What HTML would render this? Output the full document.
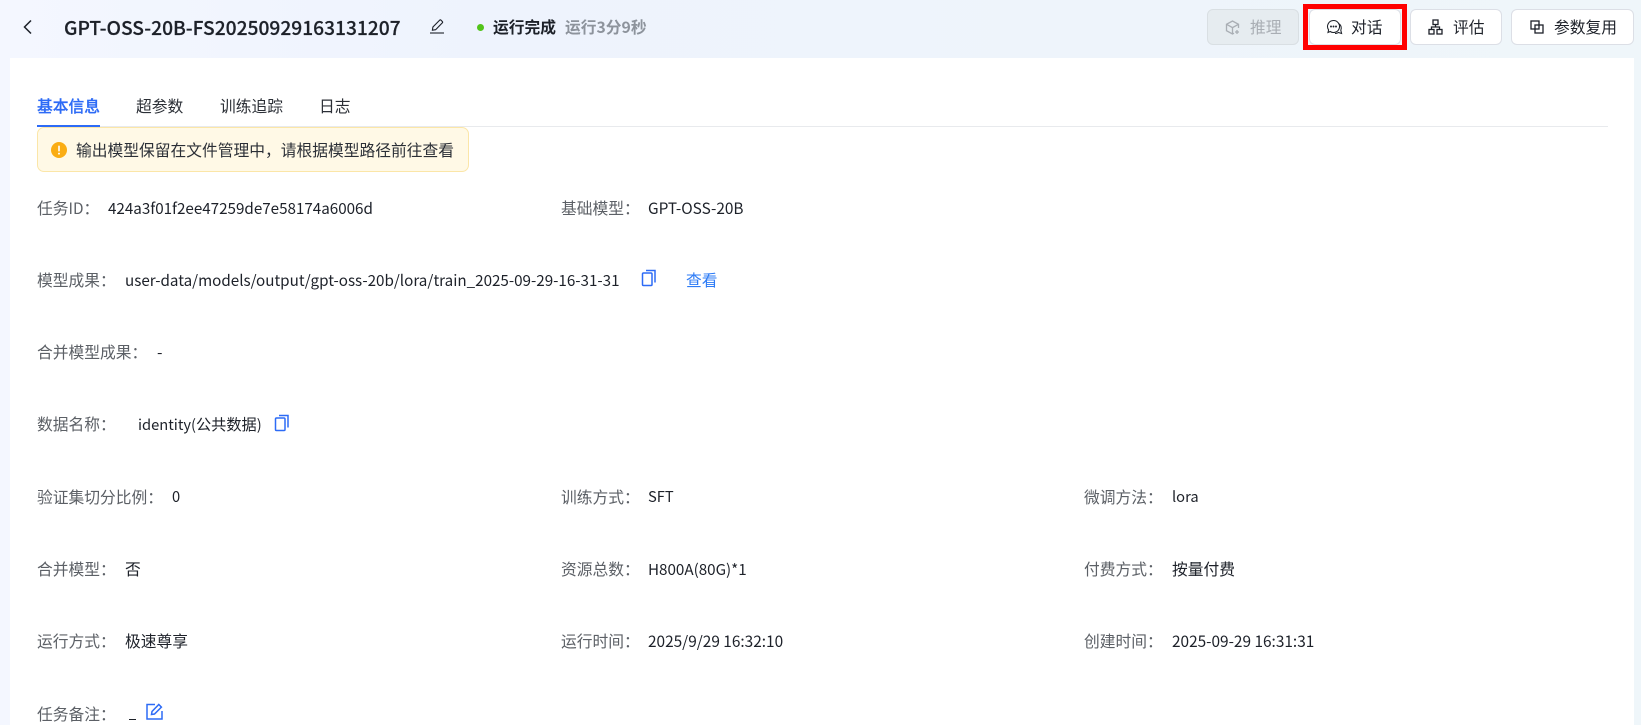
<!DOCTYPE html>
<html lang="zh-CN">
<head>
<meta charset="utf-8">
<title>GPT-OSS-20B</title>
<style>
html,body{margin:0;padding:0;width:1641px;height:725px;overflow:hidden;background:#fff}
body{position:relative;font-family:"Noto Sans CJK SC","Liberation Sans",sans-serif;font-size:15.75px;color:#1d2129}
#bg{position:absolute;left:0;top:0;width:1641px;height:725px;background:linear-gradient(90deg,#f4f7ff 0%,#eef3fd 30%,#eef4fb 65%,#eff6fa 100%)}
#panel{position:absolute;left:10px;top:58px;width:1624px;height:667px;background:#fff}
.t{position:absolute;white-space:nowrap;line-height:20px;height:20px;transform:translateY(-50%)}
.l{color:#5c6066}
.v{color:#1d2129}
.n{font-size:15.3px}
.tab{font-size:15.75px;color:#2b2f36}
.btn{position:absolute;top:9px;height:36px;box-sizing:border-box;background:#fff;border:1px solid #dcdfe6;border-radius:6px}
svg{position:absolute;display:block;fill:none}
</style>
</head>
<body>
<div id="bg"></div>
<div id="panel"></div>

<svg style="left:21px;top:17px" width="14" height="20" viewBox="0 0 14 20" stroke="#1d2129" stroke-width="1.5"><path d="M10 3.5 3.5 10 10 16.5"/></svg>
<span class="t" style="left:64px;top:27px;font-size:19.2px;font-weight:500;color:#1d2129;-webkit-text-stroke:.2px #1d2129">GPT-OSS-20B-FS20250929163131207</span>
<svg style="left:429px;top:18px" width="16" height="16" viewBox="0 0 16 16" stroke="#1d2129" stroke-width="1.1"><path d="M1 15h14"/><path d="M3.4 12.2 3.9 9 10.6 2.2a1 1 0 0 1 1.4 0l1.3 1.3a1 1 0 0 1 0 1.4L6.6 11.7Z"/></svg>
<div style="position:absolute;left:477px;top:24px;width:7px;height:7px;border-radius:50%;background:#52c41a"></div>
<span class="t" style="left:493px;top:27px;font-size:15.75px;font-weight:700;color:#1d2129">运行完成</span>
<span class="t" style="left:565px;top:27px;font-size:15.75px;font-weight:700;color:#8d939c">运行3分9秒</span>

<div class="btn" style="left:1207px;width:92px;background:#e6ecf0;border-color:#d9dfe3"></div>
<svg style="left:1225px;top:20px" width="15" height="15" viewBox="0 0 15 15" stroke="#a9aeb4" stroke-width="1.3"><path d="M13.5 8V4.3L7.5 1 1.5 4.3v6.4l6 3.3 1.5-.8"/><path d="M1.5 4.3l6 3.3 6-3.3M7.5 7.6V14"/><path d="M12 10v4M10 12h4"/></svg>
<span class="t" style="left:1250px;top:27px;font-size:15.75px;color:#a9aeb4">推理</span>

<div class="btn" style="left:1309px;width:92px"></div>
<svg style="left:1326px;top:19px" width="17" height="17" viewBox="0 0 17 17" stroke="#1d2129" stroke-width="1.05"><path d="M7.500 1.500a6 6 0 1 1-3.300 11L2 13.500l.6-2.600A6 6 0 0 1 7.500 1.500Z"/><path d="M13.200 4.800a5.500 5.500 0 0 1 1.600 6.500l.8 3.200-3.200-1a5.500 5.500 0 0 1-3.400 1"/><circle cx="5" cy="7.500" r=".45" fill="#1d2129"/><circle cx="7.500" cy="7.500" r=".45" fill="#1d2129"/><circle cx="10" cy="7.500" r=".45" fill="#1d2129"/></svg>
<span class="t" style="left:1351px;top:27px;font-size:15.75px">对话</span>

<div class="btn" style="left:1410px;width:92px"></div>
<svg style="left:1428px;top:19px" width="15" height="16" viewBox="0 0 15 16" stroke="#1d2129" stroke-width="1.3"><rect x="5" y="1" width="5" height="4.500"/><rect x="1" y="10.500" width="5" height="4.500"/><rect x="9" y="10.500" width="5" height="4.500"/><path d="M7.500 5.500V8M3.500 10.500V8h8v2.500"/></svg>
<span class="t" style="left:1453px;top:27px;font-size:15.75px">评估</span>

<div class="btn" style="left:1511px;width:123px"></div>
<svg style="left:1530px;top:20px" width="14" height="14" viewBox="0 0 14 14" stroke="#1d2129" stroke-width="1.3"><rect x="1" y="1" width="8" height="8"/><rect x="5" y="5" width="8" height="8"/></svg>
<span class="t" style="left:1554px;top:27px;font-size:15.75px">参数复用</span>

<div style="position:absolute;left:1303px;top:4px;width:104px;height:46px;box-sizing:border-box;border:5px solid #f00"></div>

<div style="position:absolute;left:37px;top:126px;width:1571px;height:1px;background:#e8eaed"></div>
<div style="position:absolute;left:37px;top:125px;width:63px;height:2px;background:#2d6bf6"></div>
<span class="t tab" style="left:37px;top:105.500px;color:#2d6bf6;font-weight:500;-webkit-text-stroke:.25px #2d6bf6">基本信息</span>
<span class="t tab" style="left:136px;top:105.500px">超参数</span>
<span class="t tab" style="left:220px;top:105.500px">训练追踪</span>
<span class="t tab" style="left:319px;top:105.500px">日志</span>

<div style="position:absolute;left:37px;top:127px;width:432px;height:45px;box-sizing:border-box;background:#fff9e6;border:1px solid #fbe6a8;border-radius:7px"></div>
<svg style="left:51px;top:142px" width="16" height="16" viewBox="0 0 16 16"><circle cx="8" cy="8" r="8" fill="#faad14"/><rect x="7.200" y="3.500" width="1.600" height="6" rx=".8" fill="#fff"/><circle cx="8" cy="11.600" r="1" fill="#fff"/></svg>
<span class="t" style="left:76px;top:149.500px;font-size:15.75px;color:#2b2f36">输出模型保留在文件管理中，请根据模型路径前往查看</span>

<span class="t l" style="left:37px;top:208px">任务<span class="n">ID</span>：</span>
<span class="t v" style="left:108px;top:208px;font-size:15.2px">424a3f01f2ee47259de7e58174a6006d</span>
<span class="t l" style="left:561px;top:208px">基础模型：</span>
<span class="t v" style="left:648px;top:208px;font-size:15.4px">GPT-OSS-20B</span>

<span class="t l" style="left:37px;top:279.500px">模型成果：</span>
<span class="t v" style="left:125px;top:279.500px;font-size:15.2px">user-data/models/output/gpt-oss-20b/lora/train_2025-09-29-16-31-31</span>
<svg style="left:641px;top:269px" width="16" height="18" viewBox="0 0 16 18" stroke="#2d6bf6" stroke-width="1.500"><rect x="1.500" y="4" width="9.500" height="12.500" rx="1"/><path d="M5 1.500h9v12"/></svg>
<span class="t" style="left:686px;top:279.500px;color:#2d7bf6">查看</span>

<span class="t l" style="left:37px;top:352px">合并模型成果：</span>
<span class="t v" style="left:157px;top:352px">-</span>

<span class="t l" style="left:37px;top:424px">数据名称：</span>
<span class="t v" style="left:138px;top:424px"><span style="font-size:14.7px">identity(</span><span style="font-size:15.2px">公共数据</span><span style="font-size:14.7px">)</span></span>
<svg style="left:274px;top:414px" width="16" height="18" viewBox="0 0 16 18" stroke="#2d6bf6" stroke-width="1.500"><rect x="1.500" y="4" width="9.500" height="12.500" rx="1"/><path d="M5 1.500h9v12"/></svg>

<span class="t l" style="left:37px;top:496.500px">验证集切分比例：</span>
<span class="t v" style="left:172px;top:496.500px;font-size:14.7px">0</span>
<span class="t l" style="left:561px;top:496.500px">训练方式：</span>
<span class="t v" style="left:648px;top:496.500px;font-size:14.7px">SFT</span>
<span class="t l" style="left:1084px;top:496.500px">微调方法：</span>
<span class="t v" style="left:1172px;top:496.500px;font-size:14.7px">lora</span>

<span class="t l" style="left:37px;top:568.500px">合并模型：</span>
<span class="t v" style="left:125px;top:568.500px">否</span>
<span class="t l" style="left:561px;top:568.500px">资源总数：</span>
<span class="t v" style="left:648px;top:568.500px;font-size:15.2px">H800A(80G)*1</span>
<span class="t l" style="left:1084px;top:568.500px">付费方式：</span>
<span class="t v" style="left:1172px;top:568.500px">按量付费</span>

<span class="t l" style="left:37px;top:641px">运行方式：</span>
<span class="t v" style="left:125px;top:641px">极速尊享</span>
<span class="t l" style="left:561px;top:641px">运行时间：</span>
<span class="t v" style="left:648px;top:641px;font-size:15.4px">2025/9/29 16:32:10</span>
<span class="t l" style="left:1084px;top:641px">创建时间：</span>
<span class="t v" style="left:1172px;top:641px;font-size:15.4px">2025-09-29 16:31:31</span>

<span class="t l" style="left:37px;top:713.500px">任务备注：</span>
<div style="position:absolute;left:129px;top:719px;width:7px;height:1px;background:#1d2129"></div>
<svg style="left:146px;top:703px" width="17" height="17" viewBox="0 0 17 17" stroke="#2d6bf6" stroke-width="1.500"><path d="M9 1.500H1v14.500h15V8"/><path d="M5.500 11.500 6 8.500 12.800 1.500l2.600 2.600L8.500 11Z"/></svg>
</body>
</html>
